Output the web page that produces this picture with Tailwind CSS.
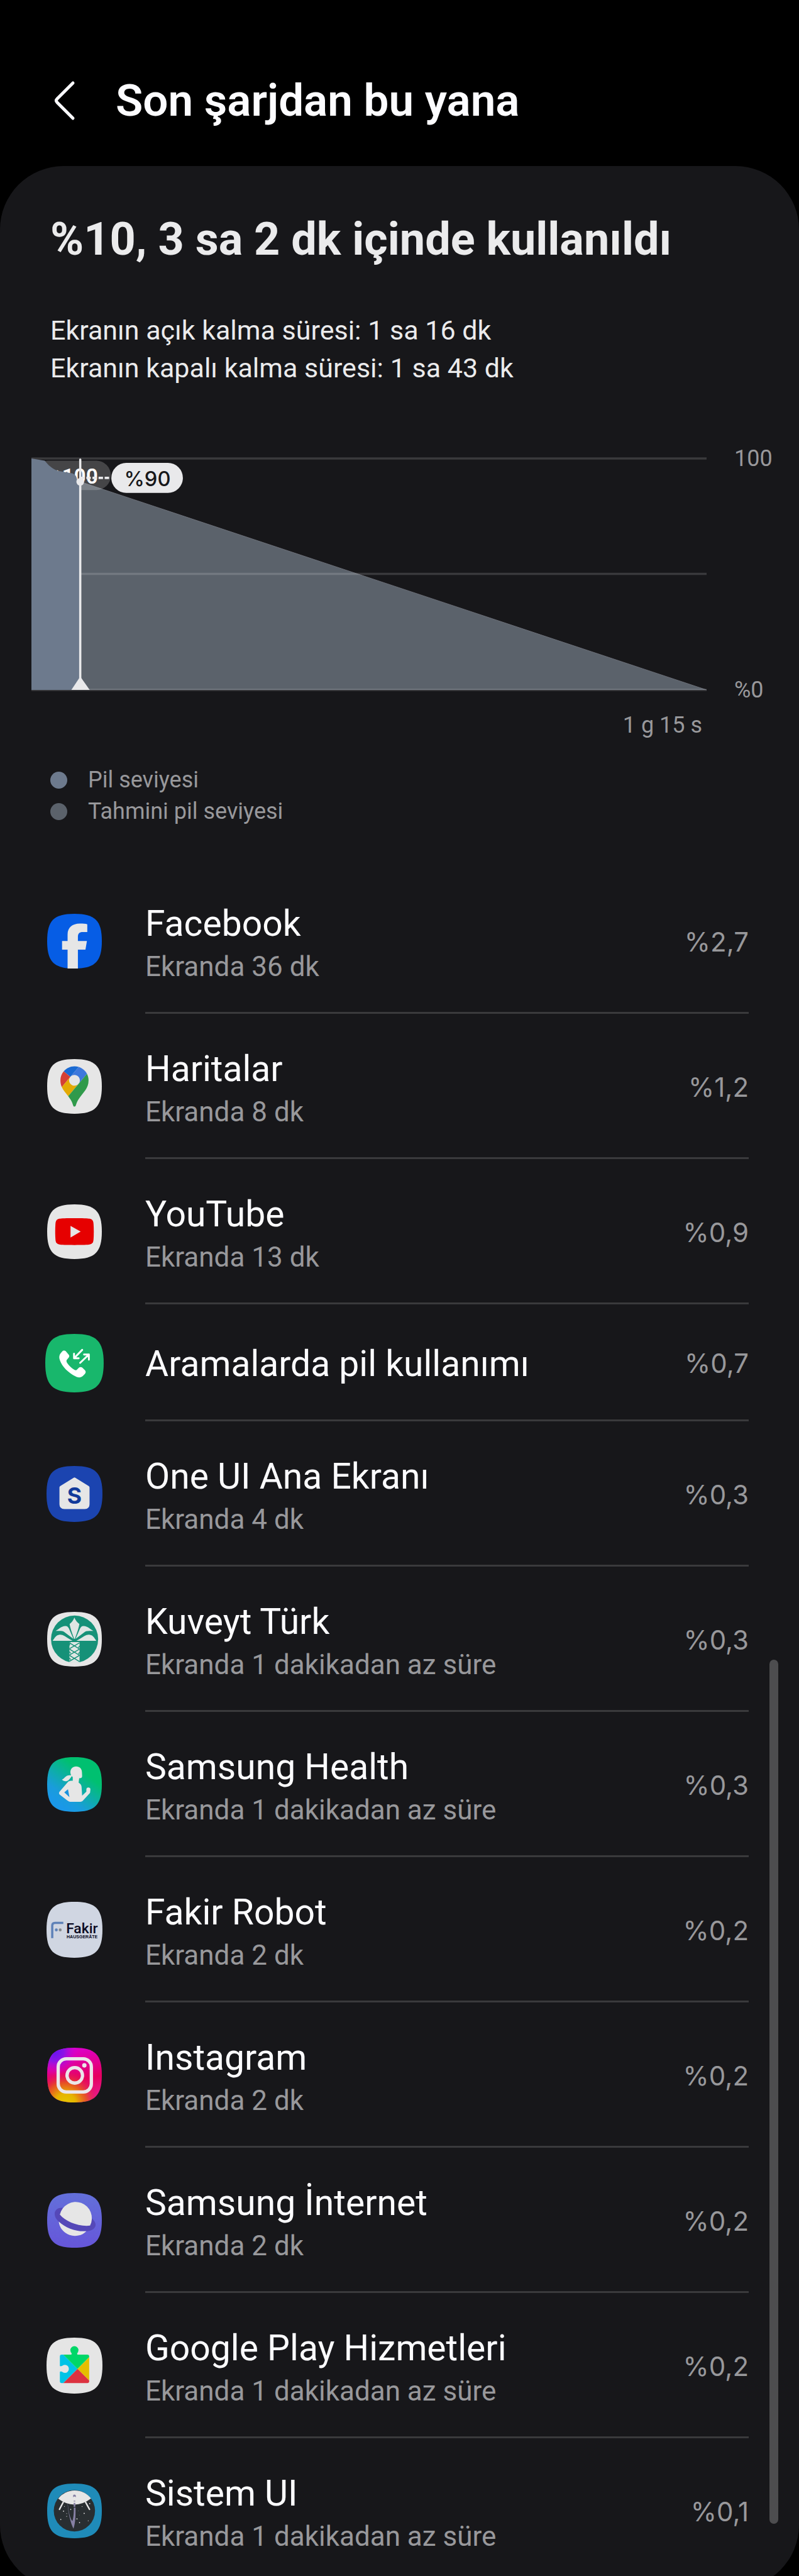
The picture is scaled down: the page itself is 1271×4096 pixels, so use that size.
<!DOCTYPE html>
<html lang="tr">

<head>
    <meta charset="UTF-8" />
    <meta name="viewport" content="width=device-width, initial-scale=1.0" />
    <title>Son şarjdan bu yana</title>
    <script src="https://cdn.jsdelivr.net/npm/@tailwindcss/browser@4"></script>
</head>

<body class="h-screen overflow-hidden bg-black font-['Roboto',sans-serif] text-[#fcfcff]">
    <!-- shared icon shape -->
    <svg class="absolute size-0" aria-hidden="true">
        <defs>
            <path id="squircle" d="M148 0C260 0 297 37 297 148S260 297 148 297 0 260 0 148 37 0 148 0Z" />
        </defs>
    </svg>

    <header class="flex items-center pt-[120px] pb-16 pl-[72px]">
        <button type="button" aria-label="Geri" class="flex h-20 w-[112px] items-center">
            <svg class="h-16 w-[60px]" viewBox="0 0 60 64" fill="none" stroke="#fafaff" stroke-width="5"
                stroke-linecap="round" stroke-linejoin="round">
                <path d="M44 4L19 29Q16 32 19 35L44 60" />
            </svg>
        </button>
        <h1 class="text-[71px] leading-[80px] font-semibold">Son şarjdan bu yana</h1>
    </header>

    <main class="relative rounded-[101px] bg-[#17171a] pt-[77px] pb-[8px]">
        <section class="px-20 text-[#ebebec]">
            <h2 class="text-[72px] leading-[80px] font-bold">%10, 3 sa 2 dk içinde kullanıldı</h2>
            <p class="mt-[74px] text-[43px] leading-[60px]">Ekranın açık kalma süresi: 1 sa 16 dk</p>
            <p class="text-[43px] leading-[60px]">Ekranın kapalı kalma süresi: 1 sa 43 dk</p>
        </section>

        <section class="mt-[94px] text-[36px] text-[#98989b]">
            <div class="flex pl-[50px]">
                <div class="flex-1 py-5">
                    <svg class="block w-full overflow-visible" viewBox="0 0 1217 417" role="img" aria-label="Pil grafiği">
                        <path d="M0 0H1217" stroke="#3a3a3c" stroke-width="4" />
                        <path d="M88 42L1217 417H88Z" fill="#5b626b" />
                        <path d="M88 42L1217 417" stroke="#73767f" stroke-width="1" />
                        <path d="M0 208H1217M0 417H1217" stroke="#fff" stroke-opacity=".15" stroke-width="4" />
                        <rect x="4" y="4" width="139" height="53" rx="26" fill="#fff" fill-opacity=".2" />
                        <text x="120" y="45" text-anchor="end" fill="#fff" font-family="Roboto" font-size="38"
                            font-weight="600">%100</text>
                        <path d="M0 0L24 4C30 12 38 19 47 22L74 27C79 29 81 32 82 37Q84 42 88 44V417H0Z" fill="#6d7a8d" />
                        <path d="M88 35H143" stroke="#e9e9eb" stroke-width="4" stroke-dasharray="8 3" />
                        <path d="M88 2V415" stroke="#e9e9eb" stroke-width="4" stroke-linecap="round" />
                        <circle cx="88" cy="42" r="7" fill="#e9e9eb" />
                        <path d="M72 417L88 393L105 417Z" fill="#e9e9eb" />
                        <rect x="144" y="8" width="129" height="54" rx="27" fill="#e9e9eb" />
                        <text x="209" y="50" text-anchor="middle" fill="#17171a" font-family="Inter" font-size="37"
                            font-weight="500">%90</text>
                    </svg>
                </div>
                <div class="flex w-[147px] flex-col justify-between pl-[44px] leading-10">
                    <span>100</span>
                    <span>%0</span>
                </div>
            </div>
            <p class="mt-[11px] pr-[154px] text-right leading-[50px]">1 g 15 s</p>
            <ul class="mt-[37px] pl-20 leading-[50px]">
                <li class="flex items-center gap-[33px]"><span class="size-[27px] rounded-full bg-[#6d7a8d]"></span>Pil seviyesi</li>
                <li class="flex items-center gap-[33px]"><span class="size-[27px] rounded-full bg-[#5b626b]"></span>Tahmini pil seviyesi</li>
            </ul>
        </section>

        <ul class="mt-[66px] pr-20 pl-[72px]">
            <li>
                <a href="#facebook" class="flex h-[231px] gap-[66px]">
                    <span class="flex w-[93px] items-center justify-center">
                        <svg class="size-[87px]" viewBox="0 0 297 297">
                            <use href="#squircle" fill="#065de5" />
                            <path d="M111 297V195H81V148H111V112C111 74 137 53 178 53C195 53 210 54 218 57V99H194C174 99 167 108 167 126V148H216L208 195H167V297Z" fill="#e6e6e6" />
                        </svg>
                    </span>
                    <span class="flex flex-1 items-center justify-between border-b-3 border-[#3a3a3c]">
                        <span class="pt-1.5">
                            <span class="block text-[57px] leading-[78px]">Facebook</span>
                            <span class="block text-[44px] leading-[58px] text-[#98989b]">Ekranda 36 dk</span>
                        </span>
                        <span class="pt-1 font-['Inter',sans-serif] text-[42px] text-[#98989b]">%2,7</span>
                    </span>
                </a>
            </li>
            <li>
                <a href="#haritalar" class="flex h-[231px] gap-[66px]">
                    <span class="flex w-[93px] items-center justify-center">
                        <svg class="size-[87px]" viewBox="0 0 297 297">
                            <use href="#squircle" fill="#e6e6e6" />
                            <g transform="translate(72 39) scale(1.655)">
                                <path d="M60.2 2.2C55.8.8 51 0 46.1 0 32 0 19.3 6.4 10.8 16.5l21.8 18.3L60.2 2.2z" fill="#1a6ad2" />
                                <path d="M10.8 16.5C4.1 24.5 0 34.9 0 46.1c0 8.7 1.7 15.7 4.6 22l28-33.3-21.8-18.3z" fill="#d44034" />
                                <path d="M46.2 28.5c9.8 0 17.7 7.9 17.7 17.7 0 4.3-1.6 8.3-4.2 11.4 0 0 13.9-16.6 27.5-32.7-5.6-10.8-15.3-19-27-22.7L32.6 34.8c3.3-3.8 8.1-6.3 13.6-6.3" fill="#3d78dc" />
                                <path d="M46.2 63.8c-9.8 0-17.7-7.9-17.7-17.7 0-4.3 1.5-8.3 4.1-11.3l-28 33.3c4.8 10.6 12.8 19.2 21 29.9l34.1-40.5c-3.3 3.9-8.1 6.3-13.5 6.3" fill="#e3aa04" />
                                <path d="M59.1 109.2c15.4-24.1 33.3-35 33.3-63 0-7.7-1.9-14.9-5.2-21.3L25.6 98c2.6 3.4 5.3 7.3 7.9 11.3 9.4 14.5 6.8 23.1 12.8 23.1s3.4-8.7 12.8-23.2" fill="#309a4b" />
                            </g>
                        </svg>
                    </span>
                    <span class="flex flex-1 items-center justify-between border-b-3 border-[#3a3a3c]">
                        <span class="pt-1.5">
                            <span class="block text-[57px] leading-[78px]">Haritalar</span>
                            <span class="block text-[44px] leading-[58px] text-[#98989b]">Ekranda 8 dk</span>
                        </span>
                        <span class="pt-1 font-['Inter',sans-serif] text-[42px] text-[#98989b]">%1,2</span>
                    </span>
                </a>
            </li>
            <li>
                <a href="#youtube" class="flex h-[231px] gap-[66px]">
                    <span class="flex w-[93px] items-center justify-center">
                        <svg class="size-[87px]" viewBox="0 0 297 297">
                            <use href="#squircle" fill="#e6e6e6" />
                            <path d="M148 75C190 75 222 76 231 78C243 81 249 87 251 98C254 120 254 176 251 198C249 209 243 215 231 218C222 220 190 221 148 221C106 221 75 220 66 218C54 215 48 209 46 198C43 176 43 120 46 98C48 87 54 81 66 78C75 76 106 75 148 75Z" fill="#e60000" />
                            <path d="M127 117L182 148L127 180Z" fill="#e6e6e6" />
                        </svg>
                    </span>
                    <span class="flex flex-1 items-center justify-between border-b-3 border-[#3a3a3c]">
                        <span class="pt-1.5">
                            <span class="block text-[57px] leading-[78px]">YouTube</span>
                            <span class="block text-[44px] leading-[58px] text-[#98989b]">Ekranda 13 dk</span>
                        </span>
                        <span class="pt-1 font-['Inter',sans-serif] text-[42px] text-[#98989b]">%0,9</span>
                    </span>
                </a>
            </li>
            <li>
                <a href="#aramalar" class="flex h-[186px] gap-[66px]">
                    <span class="flex w-[93px] items-center justify-center">
                        <svg class="size-[93px]" viewBox="0 0 315 315">
                            <use href="#squircle" transform="scale(1.06)" fill="#18b76c" />
                            <path d="M91 95C97 88 107 89 112 95L127 113C131 119 130 123 126 128L116 140C113 145 114 150 118 157C127 171 142 185 158 194C164 197 168 196 172 191L180 183C186 177 194 177 200 182L213 195C220 202 219 210 213 216L203 226C193 236 178 237 163 229C124 209 91 176 79 142C72 123 76 110 91 95Z" fill="#fff" />
                            <path d="M199 86L155 131M155 107V131H180M188 156L235 111M209 111H235V139" fill="none" stroke="#fff" stroke-width="10" stroke-linecap="round" stroke-linejoin="round" />
                        </svg>
                    </span>
                    <span class="flex flex-1 items-center justify-between border-b-3 border-[#3a3a3c]">
                        <span class="pt-1.5 text-[57px] leading-[78px]">Aramalarda pil kullanımı</span>
                        <span class="pt-1 font-['Inter',sans-serif] text-[42px] text-[#98989b]">%0,7</span>
                    </span>
                </a>
            </li>
            <li>
                <a href="#one-ui" class="flex h-[231px] gap-[66px]">
                    <span class="flex w-[93px] items-center justify-center">
                        <svg class="size-[89px]" viewBox="0 0 303 303">
                            <use href="#squircle" transform="scale(1.02)" fill="#1b44b0" />
                            <path d="M147 64Q151 60 156 64L229 109Q233 112 233 117V207Q233 233 207 233H97Q70 233 70 207V117Q70 112 74 109Z" fill="#e6e6e6" />
                            <text x="151" y="203" text-anchor="middle" font-family="Inter" font-size="121" font-weight="700" fill="#123a9a">S</text>
                        </svg>
                    </span>
                    <span class="flex flex-1 items-center justify-between border-b-3 border-[#3a3a3c]">
                        <span class="pt-1.5">
                            <span class="block text-[57px] leading-[78px]">One UI Ana Ekranı</span>
                            <span class="block text-[44px] leading-[58px] text-[#98989b]">Ekranda 4 dk</span>
                        </span>
                        <span class="pt-1 font-['Inter',sans-serif] text-[42px] text-[#98989b]">%0,3</span>
                    </span>
                </a>
            </li>
            <li>
                <a href="#kuveyt-turk" class="flex h-[231px] gap-[66px]">
                    <span class="flex w-[93px] items-center justify-center">
                        <svg class="size-[87px]" viewBox="0 0 297 297">
                            <use href="#squircle" fill="#e6e6e6" />
                            <circle cx="149" cy="148" r="128" fill="#169178" />
                            <g fill="#e0e6e4">
                                <path d="M148 31Q156 52 175 66Q172 90 150 147H147Q125 90 122 66Q140 52 148 31Z" />
                                <path id="frond-up" d="M46 103C66 93 76 78 98 77C108 76 113 80 118 90L143 147L92 108C85 103 70 103 46 103Z" />
                                <path id="frond-low" d="M30 157C42 140 48 126 68 124C84 122 95 132 138 157Z" />
                                <use href="#frond-up" transform="matrix(-1 0 0 1 297 0)" />
                                <use href="#frond-low" transform="matrix(-1 0 0 1 297 0)" />
                                <path d="M121 164H176V275Q149 279 121 275Z" />
                            </g>
                            <path d="M121 168L176 202M176 168L121 200M121 202L176 236M176 202L121 234M121 236L176 270M176 236L121 268M124 164L121 182M176 185L170 194M121 216L127 225M176 219L170 228M121 250L127 259" stroke="#169178" stroke-width="5" />
                        </svg>
                    </span>
                    <span class="flex flex-1 items-center justify-between border-b-3 border-[#3a3a3c]">
                        <span class="pt-1.5">
                            <span class="block text-[57px] leading-[78px]">Kuveyt Türk</span>
                            <span class="block text-[44px] leading-[58px] text-[#98989b]">Ekranda 1 dakikadan az süre</span>
                        </span>
                        <span class="pt-1 font-['Inter',sans-serif] text-[42px] text-[#98989b]">%0,3</span>
                    </span>
                </a>
            </li>
            <li>
                <a href="#samsung-health" class="flex h-[231px] gap-[66px]">
                    <span class="flex w-[93px] items-center justify-center">
                        <svg class="size-[87px]" viewBox="0 0 297 297">
                            <linearGradient id="health" x1=".25" y1=".9" x2=".7" y2=".3">
                                <stop offset="0" stop-color="#1a98e8" />
                                <stop offset=".25" stop-color="#1a9cdc" />
                                <stop offset="1" stop-color="#00c070" />
                            </linearGradient>
                            <use href="#squircle" fill="url(#health)" />
                            <path d="M157 50C177 50 189 63 189 81L190 102C190 111 184 115 174 114L171 138C181 144 187 152 187 162L190 209L213 187V174C214 166 220 164 226 165C233 166 235 170 235 176L233 194L197 233C192 240 187 242 180 242H129C121 243 115 240 109 235L68 203C64 199 63 193 67 188L112 136C117 129 124 128 139 128V108C130 100 126 92 126 80C127 62 139 50 157 50Z" fill="#e6e6e6" />
                            <path d="M80 122C95 116 100 98 122 98H137C127 112 118 131 98 131Q88 130 80 122Z" fill="#e6e6e6" />
                            <path d="M113 174L93 191L121 217Z" fill="#1a92de" />
                        </svg>
                    </span>
                    <span class="flex flex-1 items-center justify-between border-b-3 border-[#3a3a3c]">
                        <span class="pt-1.5">
                            <span class="block text-[57px] leading-[78px]">Samsung Health</span>
                            <span class="block text-[44px] leading-[58px] text-[#98989b]">Ekranda 1 dakikadan az süre</span>
                        </span>
                        <span class="pt-1 font-['Inter',sans-serif] text-[42px] text-[#98989b]">%0,3</span>
                    </span>
                </a>
            </li>
            <li>
                <a href="#fakir-robot" class="flex h-[231px] gap-[66px]">
                    <span class="flex w-[93px] items-center justify-center">
                        <svg class="size-[89px]" viewBox="0 0 303 303">
                            <use href="#squircle" transform="scale(1.02)" fill="#d0d6e2" />
                            <path d="M31 197V129Q31 114 46 114H91" fill="none" stroke="#5f82b8" stroke-width="12" />
                            <circle cx="53" cy="152" r="8" fill="#5f82b8" />
                            <circle cx="74" cy="152" r="8" fill="#85878c" />
                            <text x="106" y="170" font-family="Roboto" font-size="78" font-weight="500" fill="#0b0b22">Fakir</text>
                            <text x="109" y="197" font-family="Liberation Sans" font-size="24" font-weight="700" fill="#0b0b22">HAUSGERÄTE</text>
                        </svg>
                    </span>
                    <span class="flex flex-1 items-center justify-between border-b-3 border-[#3a3a3c]">
                        <span class="pt-1.5">
                            <span class="block text-[57px] leading-[78px]">Fakir Robot</span>
                            <span class="block text-[44px] leading-[58px] text-[#98989b]">Ekranda 2 dk</span>
                        </span>
                        <span class="pt-1 font-['Inter',sans-serif] text-[42px] text-[#98989b]">%0,2</span>
                    </span>
                </a>
            </li>
            <li>
                <a href="#instagram" class="flex h-[231px] gap-[66px]">
                    <span class="flex w-[93px] items-center justify-center">
                        <svg class="size-[87px]" viewBox="0 0 297 297">
                            <linearGradient id="ig-base" x1=".4" y1="0" x2=".6" y2="1">
                                <stop offset="0" stop-color="#dc00d2" />
                                <stop offset=".6" stop-color="#e6005f" />
                                <stop offset="1" stop-color="#e61e96" />
                            </linearGradient>
                            <radialGradient id="ig-warm" gradientUnits="userSpaceOnUse" cx="100" cy="305" r="190">
                                <stop offset="0" stop-color="#e6c800" />
                                <stop offset=".3" stop-color="#e6b400" />
                                <stop offset=".6" stop-color="#e65a1e" stop-opacity=".9" />
                                <stop offset="1" stop-color="#e6005f" stop-opacity="0" />
                            </radialGradient>
                            <radialGradient id="ig-cool" gradientUnits="userSpaceOnUse" cx="40" cy="20" r="130">
                                <stop offset="0" stop-color="#6414f0" />
                                <stop offset=".4" stop-color="#8c14e6" />
                                <stop offset="1" stop-color="#dc00d2" stop-opacity="0" />
                            </radialGradient>
                            <use href="#squircle" fill="url(#ig-base)" />
                            <use href="#squircle" fill="url(#ig-warm)" />
                            <use href="#squircle" fill="url(#ig-cool)" />
                            <g fill="none" stroke="#ebe6ea" stroke-width="18">
                                <rect x="60" y="60" width="180" height="180" rx="44" />
                                <circle cx="150" cy="150" r="42" />
                            </g>
                            <circle cx="202" cy="96" r="12" fill="#ebe6ea" />
                        </svg>
                    </span>
                    <span class="flex flex-1 items-center justify-between border-b-3 border-[#3a3a3c]">
                        <span class="pt-1.5">
                            <span class="block text-[57px] leading-[78px]">Instagram</span>
                            <span class="block text-[44px] leading-[58px] text-[#98989b]">Ekranda 2 dk</span>
                        </span>
                        <span class="pt-1 font-['Inter',sans-serif] text-[42px] text-[#98989b]">%0,2</span>
                    </span>
                </a>
            </li>
            <li>
                <a href="#samsung-internet" class="flex h-[231px] gap-[66px]">
                    <span class="flex w-[93px] items-center justify-center">
                        <svg class="size-[87px]" viewBox="0 0 297 297">
                            <linearGradient id="internet" x1="0" y1="0" x2="0" y2="1">
                                <stop offset="0" stop-color="#6370da" />
                                <stop offset="1" stop-color="#6656d9" />
                            </linearGradient>
                            <use href="#squircle" fill="url(#internet)" />
                            <path d="M83 80C55 78 41 95 41 113C41 132 52 146 64 156C100 190 160 212 213 207C245 206 263 190 263 172C263 158 250 143 239 135Z" fill="#5548b8" />
                            <path d="M69 117C100 155 170 184 233 177A88 88 0 1 0 69 117Z" fill="#e6e6e6" />
                            <path d="M63 155C100 190 160 212 213 207A88 88 0 0 1 63 155Z" fill="#e6e6e6" />
                        </svg>
                    </span>
                    <span class="flex flex-1 items-center justify-between border-b-3 border-[#3a3a3c]">
                        <span class="pt-1.5">
                            <span class="block text-[57px] leading-[78px]">Samsung İnternet</span>
                            <span class="block text-[44px] leading-[58px] text-[#98989b]">Ekranda 2 dk</span>
                        </span>
                        <span class="pt-1 font-['Inter',sans-serif] text-[42px] text-[#98989b]">%0,2</span>
                    </span>
                </a>
            </li>
            <li>
                <a href="#play-hizmetleri" class="flex h-[231px] gap-[66px]">
                    <span class="flex w-[93px] items-center justify-center">
                        <svg class="size-[89px]" viewBox="0 0 303 303">
                            <clipPath id="puzzle">
                                <rect x="72" y="92" width="159" height="154" rx="10" />
                            </clipPath>
                            <use href="#squircle" transform="scale(1.02)" fill="#e5e5e5" />
                            <g clip-path="url(#puzzle)">
                                <path d="M72 73V265L168 169Z" fill="#00c3e6" />
                                <path d="M72 73H264L168 169Z" fill="#00d768" />
                                <path d="M264 73V265L168 169Z" fill="#e6be00" />
                                <path d="M72 265H264L168 169Z" fill="#dc3240" />
                            </g>
                            <path d="M131 94Q138 91 136 84A22 22 0 1 1 166 84Q164 91 171 94Z" fill="#00d768" />
                            <path d="M70 153Q77 156 84 153A22 22 0 1 1 84 185Q77 181 70 187Z" fill="#e5e5e5" />
                        </svg>
                    </span>
                    <span class="flex flex-1 items-center justify-between border-b-3 border-[#3a3a3c]">
                        <span class="pt-1.5">
                            <span class="block text-[57px] leading-[78px]">Google Play Hizmetleri</span>
                            <span class="block text-[44px] leading-[58px] text-[#98989b]">Ekranda 1 dakikadan az süre</span>
                        </span>
                        <span class="pt-1 font-['Inter',sans-serif] text-[42px] text-[#98989b]">%0,2</span>
                    </span>
                </a>
            </li>
            <li>
                <a href="#sistem-ui" class="flex h-[231px] gap-[66px]">
                    <span class="flex w-[93px] items-center justify-center">
                        <svg class="size-[87px]" viewBox="0 0 297 297">
                            <use href="#squircle" fill="#1f8bb9" />
                            <circle cx="148" cy="148" r="112" fill="#292e31" />
                            <path d="M60 82A112 112 0 0 1 238 81Q195 114 148 114Q101 114 60 82Z" fill="#e6e6e6" />
                            <path d="M87 102L67 140M209 102L230 140" stroke="#e6e6e6" stroke-width="8" stroke-linecap="round" />
                            <path d="M141 75V66Q141 60 148 60T156 66V75L152 71H145ZM144 93H153V97H144ZM144 105H153V126H144Z" fill="#8680a3" />
                            <path d="M112 110C116 150 122 185 137 204C143 190 145 160 145 131H154C155 170 154 215 143 245C128 215 115 165 111 110Z" fill="#8680a3" />
                            <g fill="#e6e6e6">
                                <circle cx="89" cy="150" r="3" />
                                <circle cx="74" cy="195" r="3" />
                                <circle cx="128" cy="140" r="3" />
                                <circle cx="106" cy="163" r="2" />
                                <circle cx="106" cy="178" r="2" />
                                <circle cx="94" cy="124" r="2" />
                                <circle cx="162" cy="192" r="3" />
                                <circle cx="176" cy="212" r="3" />
                                <circle cx="201" cy="162" r="3" />
                                <circle cx="190" cy="125" r="2" />
                                <circle cx="231" cy="109" r="3" />
                                <circle cx="223" cy="202" r="2" />
                                <circle cx="170" cy="148" r="1" />
                                <circle cx="175" cy="171" r="1" />
                            </g>
                        </svg>
                    </span>
                    <span class="flex flex-1 items-center justify-between border-b-3 border-transparent">
                        <span class="pt-1.5">
                            <span class="block text-[57px] leading-[78px]">Sistem UI</span>
                            <span class="block text-[44px] leading-[58px] text-[#98989b]">Ekranda 1 dakikadan az süre</span>
                        </span>
                        <span class="pt-1 font-['Inter',sans-serif] text-[42px] text-[#98989b]">%0,1</span>
                    </span>
                </a>
            </li>
        </ul>

        <!-- scroll thumb -->
        <div class="absolute right-[33px] bottom-[103px] h-[1374px] w-[14px] rounded-full bg-[#4d4d4f]"></div>
    </main>
</body>

</html>
